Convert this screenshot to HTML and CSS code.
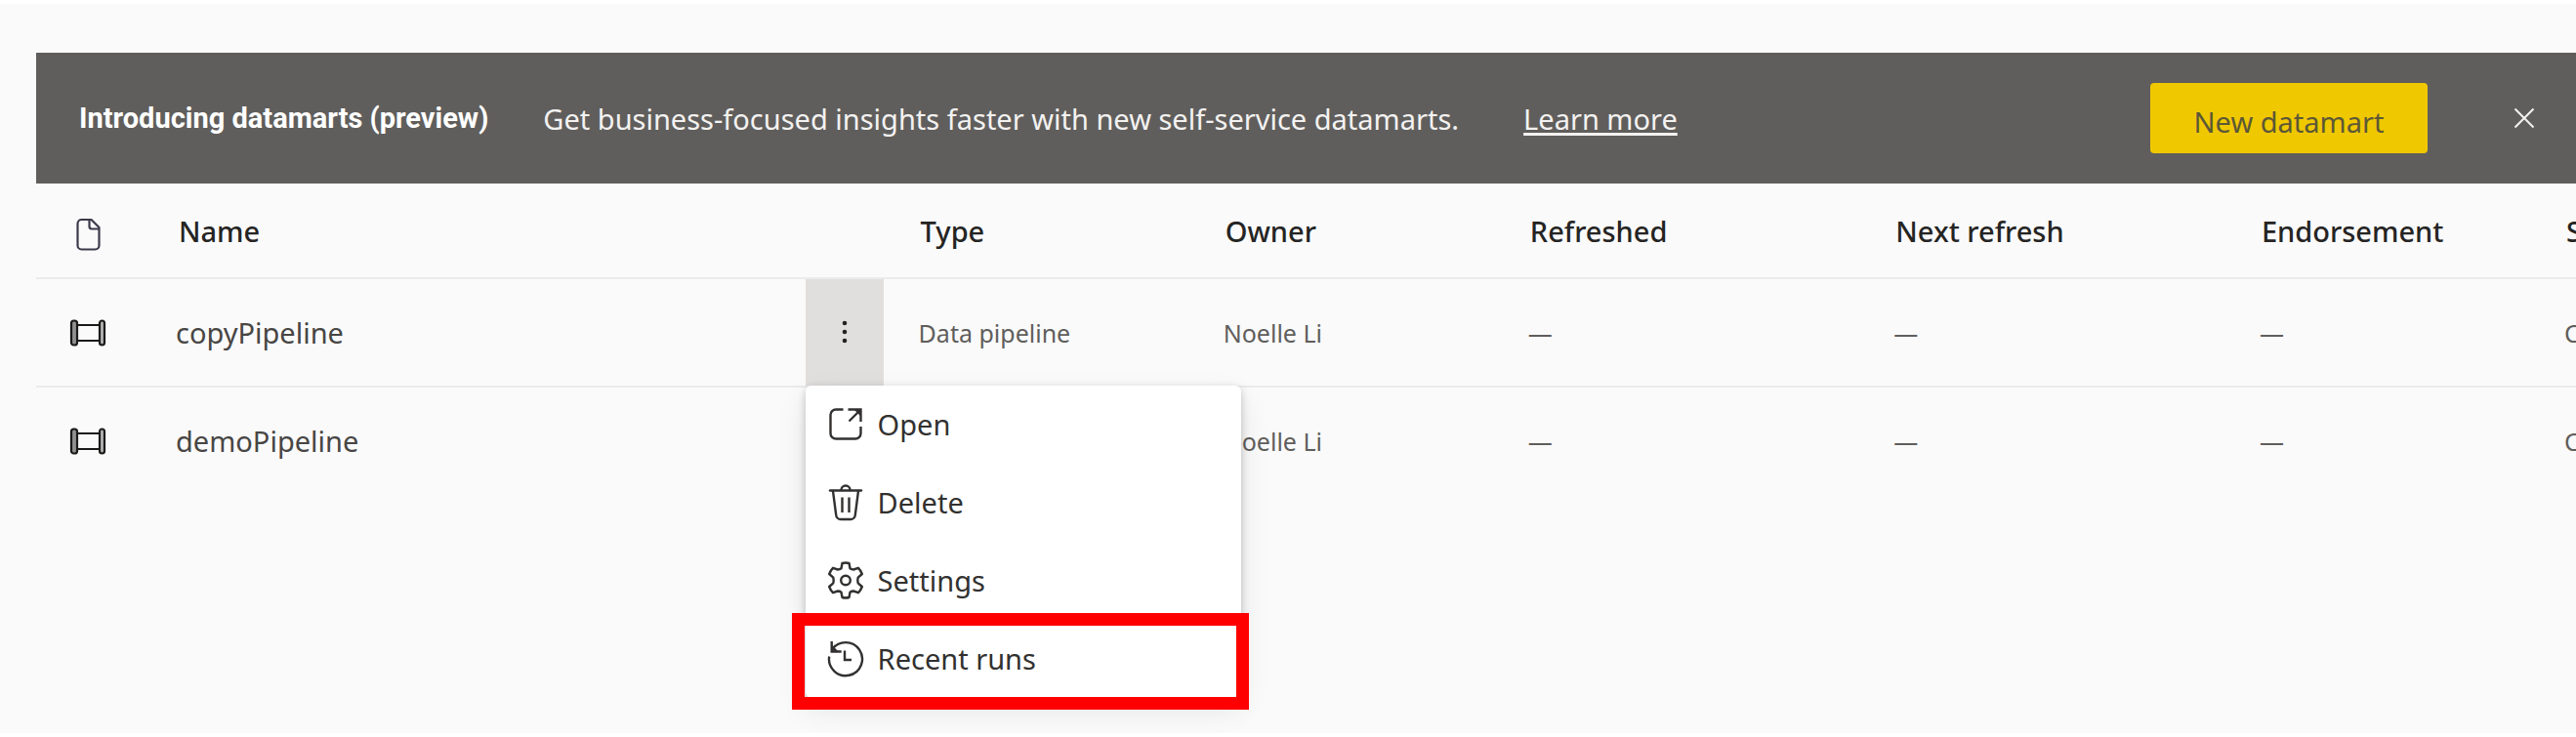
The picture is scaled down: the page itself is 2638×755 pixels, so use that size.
FILE: index.html
```html
<!DOCTYPE html>
<html lang="en">
<head>
<meta charset="utf-8">
<meta name="viewport" content="width=device-width, initial-scale=1">
<title>Workspace items</title>
<link rel="stylesheet" href="styles.css">
</head>
<body>
<main class="workspace">
  <section class="banner" aria-label="Announcement">
    <h1 class="banner-title">Introducing datamarts (preview)</h1>
    <p class="banner-text">Get business-focused insights faster with new self-service datamarts.</p>
    <a class="banner-link" href="#">Learn more</a>
    <button class="banner-action" type="button">New datamart</button>
    <button class="banner-close" type="button" aria-label="Close">
      <svg width="22" height="22" viewBox="0 0 22 22" fill="none" stroke="currentColor" stroke-width="2"><path d="M1.5 1.5l19 19M20.5 1.5l-19 19"/></svg>
    </button>
  </section>

  <table class="items">
    <colgroup>
      <col class="col-icon"><col><col class="col-more"><col class="col-narrow"><col class="col-narrow">
      <col class="col-wide"><col class="col-wide"><col class="col-narrow"><col class="col-last">
    </colgroup>
    <thead>
      <tr>
        <th class="icon-cell">
          <svg class="icon" width="38" height="40" viewBox="0 0 38 40" fill="none" stroke="#3b3a4a" stroke-width="2.2" stroke-linejoin="round"><path d="M12.500 5h10l8 8v18.500a4 4 0 0 1-4 4H12.500a4 4 0 0 1-4-4V9a4 4 0 0 1 4-4z"/><path d="M20.500 5.500v6.500a2.500 2.500 0 0 0 2.500 2.500h7"/></svg>
        </th>
        <th colspan="2">Name</th>
        <th>Type</th>
        <th>Owner</th>
        <th>Refreshed</th>
        <th>Next refresh</th>
        <th>Endorsement</th>
        <th>S</th>
      </tr>
    </thead>
    <tbody>
      <tr>
        <td class="icon-cell">
          <svg class="icon" width="38" height="40" viewBox="0 0 38 40" stroke="#1b1a19" stroke-width="2.2"><path d="M7 12h24M7 28h24"/><rect x="2" y="7.500" width="6" height="25" rx="2.600" fill="#919191"/><rect x="31" y="7.500" width="5" height="25" rx="2.500" fill="#b5b5b5"/></svg>
        </td>
        <td class="name">copyPipeline</td>
        <td class="more-cell">
          <button class="more" type="button" aria-label="More options" aria-expanded="true">
            <svg width="8" height="26" viewBox="0 0 8 26" fill="#242322"><circle cx="4" cy="3" r="2.300"/><circle cx="4" cy="12" r="2.300"/><circle cx="4" cy="21" r="2.300"/></svg>
          </button>
          <div class="menu" role="menu">
            <button class="menu-item" type="button" role="menuitem">
              <svg width="38" height="40" viewBox="0 0 38 40" fill="none" stroke="currentColor" stroke-width="2.400"><path d="M16.500 5.500H9a5.500 5.500 0 0 0-5.500 5.500v19a5.500 5.500 0 0 0 5.500 5.500h20a5.500 5.500 0 0 0 5.500-5.500v-7"/><path d="M21.500 5.500H34.500V18M34 6L22.500 17.500"/><path d="M27.500 5.500h7v7z" fill="currentColor" stroke="none"/></svg>
              Open
            </button>
            <button class="menu-item" type="button" role="menuitem">
              <svg width="38" height="40" viewBox="0 0 38 40" fill="none" stroke="currentColor" stroke-width="2.400" stroke-linecap="round" stroke-linejoin="round"><path d="M3 8.500h32"/><path d="M14.500 8a4.500 4.500 0 0 1 9 0"/><path d="M6 9l3.200 24.500a4.800 4.800 0 0 0 4.800 4.500h10a4.800 4.800 0 0 0 4.800-4.500L32 9"/><path d="M15.500 15.500v15.500M22.500 15.500v15.500" stroke-linecap="butt"/></svg>
              Delete
            </button>
            <button class="menu-item" type="button" role="menuitem">
              <svg width="38" height="40" viewBox="0 0 38 40" fill="none" stroke="currentColor" stroke-width="2.400" stroke-linejoin="round"><circle cx="19" cy="20.500" r="4.800"/><path d="M15.500 3Q19 2 22.500 3L23.500 8.300Q25 9.500 27 9.500L32 7.800Q34.500 10.300 35.800 14L31.700 17.700Q31 20.500 31.700 23.300L35.800 27Q34.500 30.700 32 33.200L27 31.500Q25 31.500 23.500 32.700L22.500 38Q19 39 15.500 38L14.500 32.700Q13 31.500 11 31.500L6 33.200Q3.500 30.700 2.200 27L6.300 23.300Q7 20.500 6.300 17.700L2.200 14Q3.500 10.300 6 7.800L11 9.500Q13 9.500 14.500 8.300Z"/></svg>
              Settings
            </button>
            <button class="menu-item highlighted" type="button" role="menuitem">
              <svg width="38" height="40" viewBox="0 0 38 40" fill="none" stroke="currentColor" stroke-width="2.400"><path d="M2.200 18.500A17 17 0 1 0 5 11.500a17 17 0 0 1 3.500-4"/><path d="M4.700 3v10.500h10"/><path d="M4.700 13.500v-7l7 7z" fill="currentColor" stroke="none"/><path d="M18 12.500v9.500h7"/></svg>
              Recent runs
            </button>
          </div>
        </td>
        <td>Data pipeline</td>
        <td>Noelle Li</td>
        <td>—</td>
        <td>—</td>
        <td>—</td>
        <td>C</td>
      </tr>
      <tr>
        <td class="icon-cell">
          <svg class="icon" width="38" height="40" viewBox="0 0 38 40" stroke="#1b1a19" stroke-width="2.2"><path d="M7 12h24M7 28h24"/><rect x="2" y="7.500" width="6" height="25" rx="2.600" fill="#919191"/><rect x="31" y="7.500" width="5" height="25" rx="2.500" fill="#b5b5b5"/></svg>
        </td>
        <td class="name">demoPipeline</td>
        <td></td>
        <td></td>
        <td>Noelle Li</td>
        <td>—</td>
        <td>—</td>
        <td>—</td>
        <td>C</td>
      </tr>
    </tbody>
  </table>
</main>
</body>
</html>
```
FILE: styles.css
```css
* {
  box-sizing: border-box;
}

body {
  margin: 0;
  font-family: "Noto Sans", "Open Sans", sans-serif;
  font-size: 29px;
  color: #323130;
}

button {
  font: inherit;
  color: inherit;
  border: 0;
  background: none;
  cursor: pointer;
}

svg {
  display: block;
  flex: none;
}

.workspace {
  min-height: 100vh;
  padding: 50px 0 0 37px;
  background: #fafafa;
  border-top: 4px solid #fff;
  border-bottom: 4px solid #fff;
  overflow: hidden;
}

.banner {
  display: flex;
  align-items: center;
  min-height: 134px;
  padding: 0 42px 0 44px;
  background: #605e5c;
  color: #f3f2f1;
  white-space: nowrap;
}

.banner-title {
  margin: 0 56px 0 0;
  font: 700 29px Roboto, sans-serif;
  color: #fff;
}

.banner-text {
  margin: 0 66px 0 0;
}

.banner-link {
  color: inherit;
  text-decoration-thickness: 3px;
  text-underline-offset: 3px;
}

.banner-action {
  width: 284px;
  height: 72px;
  margin-left: auto;
  padding: 7px 0 0;
  border-radius: 4px;
  background: #f0c800;
  color: #5c5836;
}

.banner-close {
  margin-left: 88px;
  padding: 0;
}

.items {
  width: 100%;
  table-layout: fixed;
  border-spacing: 0;
  white-space: nowrap;
}

.col-icon {
  width: 108px;
}

.col-more {
  width: 80px;
}

.col-narrow {
  width: 12%;
}

.col-wide {
  width: 14.4%;
}

.col-last {
  width: 48px;
}

.items th,
.items td {
  padding: 0 0 0 36px;
  text-align: left;
}

.items th {
  height: 98px;
  padding-left: 38px;
  font-weight: 500;
  color: #252423;
  border-bottom: 2px solid #ebebeb;
}

.items td {
  height: 111px;
  font-size: 25px;
  color: #605e5c;
}

.items tr:not(:last-child) td {
  border-bottom: 2px solid #ebebeb;
}

.items tr:last-child td {
  height: 109px;
}

.items .name {
  padding-left: 35px;
  font-size: 29px;
  color: #484644;
}

.items .icon-cell {
  padding-left: 34px;
}

.items th.icon-cell {
  padding-top: 8px;
}

.items .more-cell {
  position: relative;
  padding: 0;
}

.more {
  display: flex;
  align-items: center;
  justify-content: center;
  width: 100%;
  height: 100%;
  padding: 0;
  background: #e1dfdd;
}

.menu {
  position: absolute;
  top: 100%;
  left: 0;
  z-index: 1;
  width: 446px;
  border-radius: 6px;
  background: #fff;
  box-shadow: 0 3px 8px rgba(0, 0, 0, 0.22), 0 12px 30px rgba(0, 0, 0, 0.09);
  font-size: 29px;
  color: #323130;
}

.menu-item {
  position: relative;
  display: flex;
  align-items: center;
  gap: 14px;
  width: 100%;
  height: 80px;
  padding: 0 22px 2px;
}

.highlighted::after {
  content: "";
  position: absolute;
  inset: -7px -8px -12px -14px;
  border: 13px solid #f00;
}
```
